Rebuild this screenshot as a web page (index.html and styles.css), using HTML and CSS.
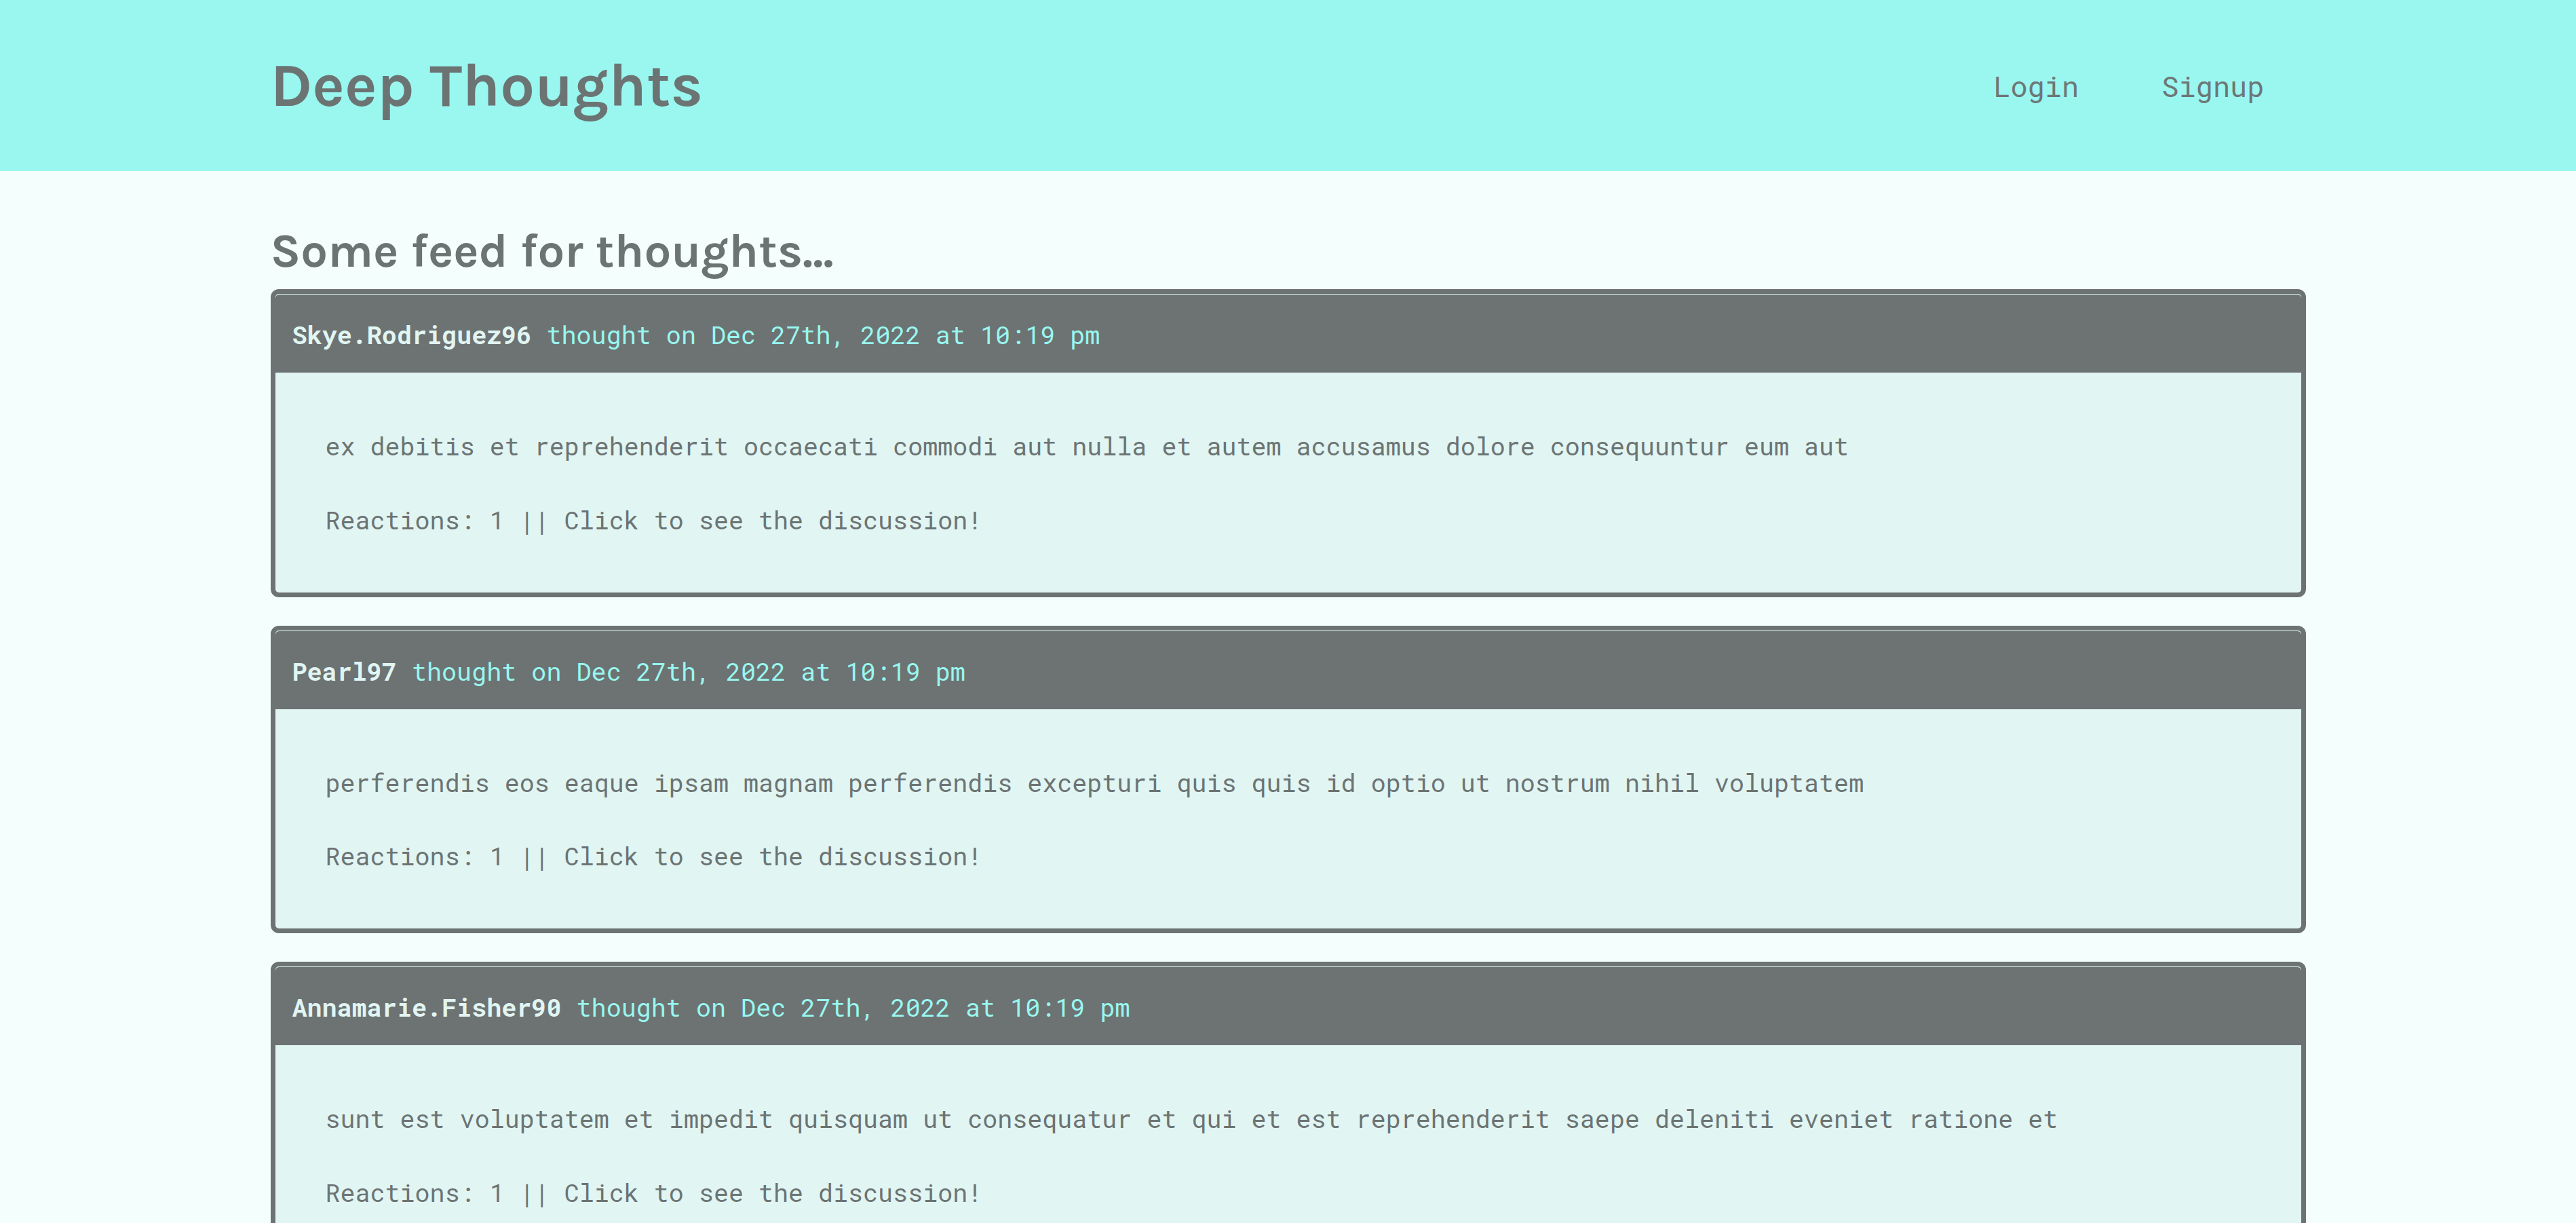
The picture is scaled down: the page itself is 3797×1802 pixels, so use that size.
FILE: index.html
```html
<!DOCTYPE html>
<html lang="en">
<head>
<meta charset="utf-8">
<title>Deep Thoughts</title>
<link rel="stylesheet" href="styles.css">
</head>
<body>
<header class="site-header">
  <div class="container header-inner">
    <h1 class="brand">Deep Thoughts</h1>
    <nav class="nav">
      <a class="nav-link" href="#">Login</a>
      <a class="nav-link" href="#">Signup</a>
    </nav>
  </div>
</header>
<main class="container main">
  <h2 class="feed-title">Some feed for thoughts...</h2>
  <div class="card">
    <p class="card-header"><span class="username">Skye.Rodriguez96</span> thought on Dec 27th, 2022 at 10:19 pm</p>
    <div class="card-body">
      <p class="thought">ex debitis et reprehenderit occaecati commodi aut nulla et autem accusamus dolore consequuntur eum aut</p>
      <p class="reactions">Reactions: 1 || Click to see the discussion!</p>
    </div>
  </div>
  <div class="card">
    <p class="card-header"><span class="username">Pearl97</span> thought on Dec 27th, 2022 at 10:19 pm</p>
    <div class="card-body">
      <p class="thought">perferendis eos eaque ipsam magnam perferendis excepturi quis quis id optio ut nostrum nihil voluptatem</p>
      <p class="reactions">Reactions: 1 || Click to see the discussion!</p>
    </div>
  </div>
  <div class="card">
    <p class="card-header"><span class="username">Annamarie.Fisher90</span> thought on Dec 27th, 2022 at 10:19 pm</p>
    <div class="card-body">
      <p class="thought">sunt est voluptatem et impedit quisquam ut consequatur et qui et est reprehenderit saepe deleniti eveniet ratione et</p>
      <p class="reactions">Reactions: 1 || Click to see the discussion!</p>
    </div>
  </div>
</main>
</body>
</html>
```
FILE: styles.css
```css
* { box-sizing: border-box; }
html, body { margin: 0; padding: 0; }
body {
  background: #f4fffd;
  color: #6c7473;
  font-family: "Roboto Mono", "DejaVu Sans Mono", monospace;
}
.container {
  width: 100%;
  max-width: 3000px;
  margin: 0 auto;
}
.site-header {
  background: #99f7f0;
}
.header-inner {
  height: 252px;
  display: flex;
  align-items: center;
  justify-content: space-between;
}
.brand {
  margin: 0;
  font-family: "Karla", "Lato", sans-serif;
  font-weight: 700;
  font-size: 90px;
  color: #6c7473;
}
.nav {
  display: flex;
  align-items: center;
}
.nav-link {
  padding: 0 61px;
  font-size: 42px;
  color: #6e7676;
  text-decoration: none;
}
.main {
  padding-top: 76px;
}
.feed-title {
  margin: 0 0 15px;
  font-family: "Karla", "Lato", sans-serif;
  font-weight: 700;
  font-size: 70.4px;
  color: #6c7473;
}
.card {
  border: 7px solid #6c7372;
  border-radius: 12px;
  background: #e1f5f3;
  margin-bottom: 42px;
}
.card-header {
  margin: 0;
  padding: 34px 25px 32px;
  background: #6c7372;
  border-top: 1px solid #e1f5f3;
  border-radius: 6px 6px 0 0;
  font-size: 36.75px;
  color: #99f7f0;
}
.username {
  font-weight: 700;
  color: #e1f5f3;
}
.card-body {
  padding: 84px 74px 83px;
  font-size: 36.7px;
  color: #6c7473;
}
.card-body p {
  margin: 0;
}
.card-body .thought {
  margin-bottom: 60.5px;
}
```
